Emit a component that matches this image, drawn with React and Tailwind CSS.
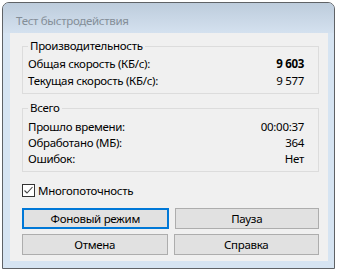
import React from "react";

function Row({ label, value, bold, h = "h-[16px]" }) {
  return (
    <div className={"flex items-center justify-between " + h}>
      <span>{label}</span>
      <span className={bold ? "font-bold" : ""}>{value}</span>
    </div>
  );
}

function Group({ title, children, className = "" }) {
  return (
    <fieldset className={"shrink-0 border border-[#dcdcdc] px-[5px] " + className}>
      <legend className="px-[2px] leading-[14px]">{title}</legend>
      <div className="pr-[9px]">{children}</div>
    </fieldset>
  );
}

function Btn({ children, primary }) {
  return (
    <div
      className={
        "flex h-[21px] flex-1 items-center justify-center bg-[#e1e1e1] " +
        (primary ? "border-2 border-[#0078d7]" : "border border-[#adadad]")
      }
    >
      {children}
    </div>
  );
}

export default function App() {
  return (
    <div
      className="h-[271px] w-[337px] bg-white pl-[2px] pt-[2px] text-[11.5px] leading-[16px] tracking-[-0.3px] text-black"
      style={{ fontFamily: '"Noto Sans", "Open Sans", sans-serif' }}
    >
      <div className="flex h-[267px] w-[333px] flex-col rounded-t-[7px] border border-[#5f6266] bg-[#d6e4f2]">
        <div className="flex h-[30px] shrink-0 items-center rounded-t-[6px] bg-gradient-to-b from-[#bdccdc] to-[#d4e1ef] pl-[13px] pt-[6px] text-[#848e98]">
          Тест быстродействия
        </div>
        <div className="ml-[7px] mr-[6px] flex h-[228px] shrink-0 flex-col bg-[#f0f0f0] pl-[12px] pr-[9px] pt-[6px]">
          <Group title="Производительность" className="h-[55px]">
            <div className="pt-[2px]">
              <Row label="Общая скорость (КБ/с):" value="9 603" bold h="h-[17px]" />
              <Row label="Текущая скорость (КБ/с):" value="9 577" h="h-[17px]" />
            </div>
          </Group>
          <Group title="Всего" className="mt-[7px] h-[71px]">
            <div className="pt-[4px]">
              <Row label="Прошло времени:" value="00:00:37" />
              <Row label="Обработано (МБ):" value="364" />
              <Row label="Ошибок:" value="Нет" />
            </div>
          </Group>
          <div className="mt-[12px] flex h-[13px] shrink-0 items-center">
            <div className="flex h-[13px] w-[13px] items-center justify-center border border-[#333333] bg-white">
              <svg width="11" height="11" viewBox="0 0 11 11">
                <path d="M1.5 5.5 L4 8 L9.5 2" fill="none" stroke="#444" strokeWidth="1.1" />
              </svg>
            </div>
            <span className="ml-[3px]">Многопоточность</span>
          </div>
          <div className="mt-[11px] flex shrink-0 gap-[6px]">
            <Btn primary>Фоновый режим</Btn>
            <Btn>Пауза</Btn>
          </div>
          <div className="mt-[5px] flex shrink-0 gap-[6px]">
            <Btn>Отмена</Btn>
            <Btn>Справка</Btn>
          </div>
        </div>
      </div>
    </div>
  );
}
